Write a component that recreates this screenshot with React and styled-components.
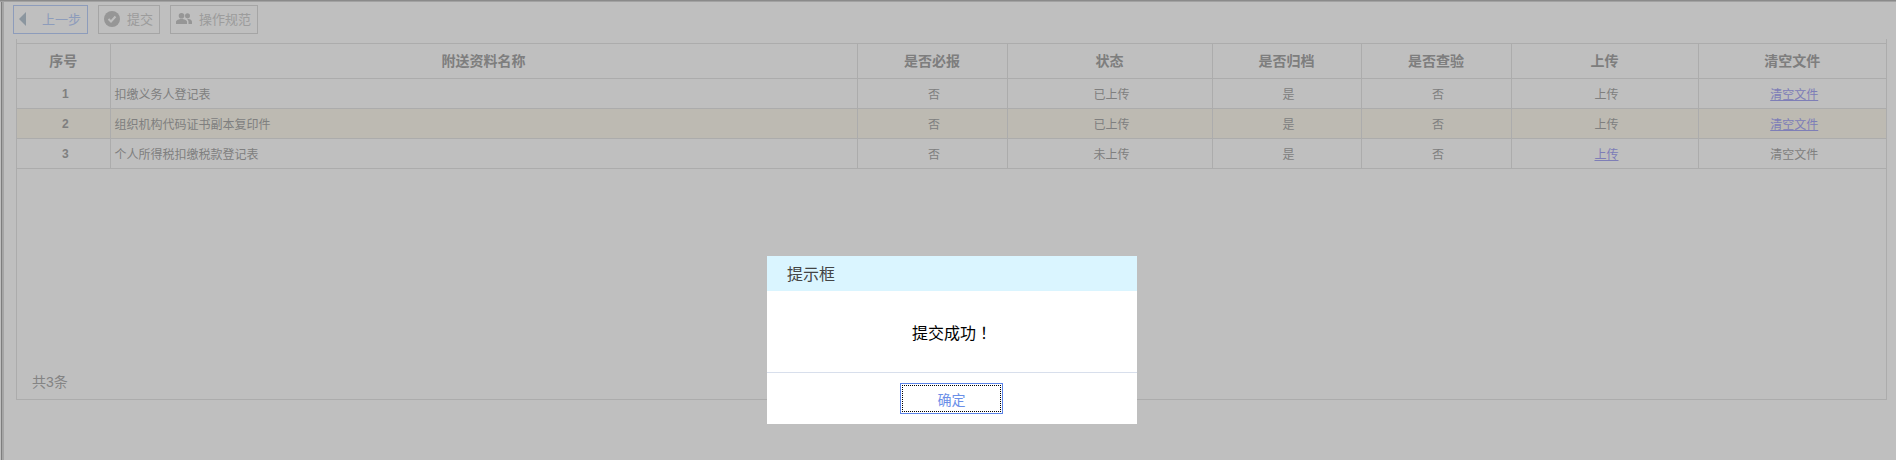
import React from 'react';
import styled, { createGlobalStyle } from 'styled-components';

const GlobalStyle = createGlobalStyle`
  html, body {
    margin: 0;
    padding: 0;
    background: #fff;
  }
  body {
    font-family: "Liberation Sans", "Noto Sans CJK SC", sans-serif;
    font-size: 12px;
    color: #aaa;
    overflow: hidden;
  }
`;

const Page = styled.div`
  box-sizing: border-box;
  width: 1896px;
  height: 460px;
  overflow: hidden;
  background: #fff;
  box-shadow: inset 0 1px 0 #b8b8b8, inset 0 2px 0 #d8d8d8,
    inset 1px 0 0 #fff, inset 2px 0 0 #a8a8a8, inset 4px 0 0 #dcdcdc;
  padding: 5px 10px 0 13px;
`;

const Toolbar = styled.div`
  display: flex;
  gap: 10px;
  height: 29px;
  margin-bottom: 5px;
`;

const ToolButton = styled.button`
  box-sizing: border-box;
  display: flex;
  align-items: center;
  height: 29px;
  width: ${p => p.$width}px;
  padding: 0 0 2px ${p => p.$pad}px;
  background: #fff;
  border: 1px solid ${p => (p.$active ? '#bcd0fa' : '#ddd')};
  color: ${p => (p.$active ? '#bcd0fa' : '#d0d0d0')};
  font: inherit;
  font-size: 13px;
`;

const ButtonLabel = styled.span`
  margin-left: ${p => p.$gap}px;
`;

const Frame = styled.div`
  box-sizing: border-box;
  width: 1871px;
  height: 361px;
  border: 1px solid #e6e6e6;
  border-top-width: 0;
  margin-left: 3px;
  padding-top: 4px;
  display: flex;
  flex-direction: column;
  justify-content: space-between;
`;

const Table = styled.table`
  border-collapse: collapse;
  table-layout: fixed;
  width: 1869px;
  font-size: 12px;
`;

const Th = styled.th`
  height: 32px;
  padding: 0 0 2px;
  border: 1px solid #e6e6e6;
  border-left: none;
  font-size: 14px;
  font-weight: bold;
  color: #a8a8a8;
  text-align: center;
  &:last-child { border-right: none; }
`;

const Row = styled.tr`
  background: ${p => (p.$highlight ? '#fcf9ee' : '#fff')};
`;

const Td = styled.td`
  height: 29px;
  padding: 0 0 0 4px;
  border: 1px solid #e6e6e6;
  border-left: none;
  text-align: ${p => (p.$name ? 'left' : 'center')};
  font-weight: ${p => (p.$index ? 'bold' : 'normal')};
  &:last-child { border-right: none; }
`;

const FileLink = styled.a`
  color: #a8a8f5;
  text-decoration: underline;
`;

const Total = styled.div`
  padding: 0 0 8px 15px;
  font-size: 14px;
  color: #b0b0b0;
`;

const Overlay = styled.div`
  position: fixed;
  inset: 0;
  background: rgba(0, 0, 0, 0.25);
`;

const Dialog = styled.div`
  position: fixed;
  left: 767px;
  top: 256px;
  width: 370px;
  height: 168px;
  background: #fff;
  display: flex;
  flex-direction: column;
`;

const DialogTitle = styled.div`
  height: 35px;
  line-height: 38px;
  padding-left: 20px;
  background: #daf5ff;
  font-size: 16px;
  color: #444;
`;

const DialogBody = styled.div`
  box-sizing: border-box;
  height: 82px;
  display: flex;
  align-items: center;
  justify-content: center;
  font-size: 16px;
  color: #000;
  border-bottom: 1px solid #d8dfec;
`;

const Bang = styled.span`
  font-family: "Noto Sans CJK TC", sans-serif;
`;

const DialogFoot = styled.div`
  flex: 1;
  display: flex;
  align-items: flex-start;
  justify-content: center;
  padding: 10px 1px 0 0;
`;

const ConfirmButton = styled.button`
  box-sizing: border-box;
  width: 103px;
  height: 31px;
  background: #fff;
  border: 1px solid #5b84e8;
  padding: 0;
  color: #6b8fe8;
  font: inherit;
  font-size: 14px;
  outline: 1px dotted #000;
  outline-offset: -3px;
`;

const columns = [
  { title: '序号', width: 93 },
  { title: '附送资料名称', width: 747 },
  { title: '是否必报', width: 150 },
  { title: '状态', width: 205 },
  { title: '是否归档', width: 149 },
  { title: '是否查验', width: 150 },
  { title: '上传', width: 187 },
  { title: '清空文件', width: 188 },
];

const rows = [
  { id: 1, name: '扣缴义务人登记表', status: '已上传', upload: false, clear: true },
  { id: 2, name: '组织机构代码证书副本复印件', status: '已上传', upload: false, clear: true, highlight: true },
  { id: 3, name: '个人所得税扣缴税款登记表', status: '未上传', upload: true, clear: false },
];

const BackIcon = () => (
  <svg width="7" height="14" viewBox="0 0 7 14">
    <path d="M7 0 V14 L0 7 Z" fill="#bac8d5" />
  </svg>
);

const CheckIcon = () => (
  <svg width="16" height="16" viewBox="0 0 16 16">
    <circle cx="8" cy="8" r="8" fill="#c8c8c8" />
    <path d="M4.5 8 L7 10.5 L11.5 5.5" fill="none" stroke="#fff" strokeWidth="2" />
  </svg>
);

const UsersIcon = () => (
  <svg width="16" height="11" viewBox="0 0 16 11">
    <circle cx="5.5" cy="2.8" r="2.8" fill="#c8c8c8" />
    <path d="M0 11 V9 C0 7 3 6 5.5 6 C8 6 11 7 11 9 V11 Z" fill="#c8c8c8" />
    <circle cx="11.5" cy="2.8" r="2.5" fill="#c8c8c8" />
    <path d="M10.5 5.8 C13 5.6 16 6.8 16 9 V11 H12.5 V9 C12.5 7.5 11.8 6.5 10.5 5.8 Z" fill="#c8c8c8" />
  </svg>
);

const App = () => (
  <>
    <GlobalStyle />
    <Page>
      <Toolbar>
        <ToolButton $active $width={75} $pad={5}>
          <BackIcon />
          <ButtonLabel $gap={16}>上一步</ButtonLabel>
        </ToolButton>
        <ToolButton $width={62} $pad={5}>
          <CheckIcon />
          <ButtonLabel $gap={7}>提交</ButtonLabel>
        </ToolButton>
        <ToolButton $width={88} $pad={5}>
          <UsersIcon />
          <ButtonLabel $gap={7}>操作规范</ButtonLabel>
        </ToolButton>
      </Toolbar>
      <Frame>
        <Table>
          <colgroup>
            {columns.map(c => <col key={c.title} width={c.width} />)}
          </colgroup>
          <thead>
            <tr>
              {columns.map(c => <Th key={c.title}>{c.title}</Th>)}
            </tr>
          </thead>
          <tbody>
            {rows.map(r => (
              <Row key={r.id} $highlight={r.highlight}>
                <Td $index>{r.id}</Td>
                <Td $name>{r.name}</Td>
                <Td>否</Td>
                <Td>{r.status}</Td>
                <Td>是</Td>
                <Td>否</Td>
                <Td>{r.upload ? <FileLink>上传</FileLink> : '上传'}</Td>
                <Td>{r.clear ? <FileLink>清空文件</FileLink> : '清空文件'}</Td>
              </Row>
            ))}
          </tbody>
        </Table>
        <Total>共3条</Total>
      </Frame>
    </Page>
    <Overlay />
    <Dialog>
      <DialogTitle>提示框</DialogTitle>
      <DialogBody>提交成功<Bang>！</Bang></DialogBody>
      <DialogFoot>
        <ConfirmButton>确定</ConfirmButton>
      </DialogFoot>
    </Dialog>
  </>
);

export default App;
